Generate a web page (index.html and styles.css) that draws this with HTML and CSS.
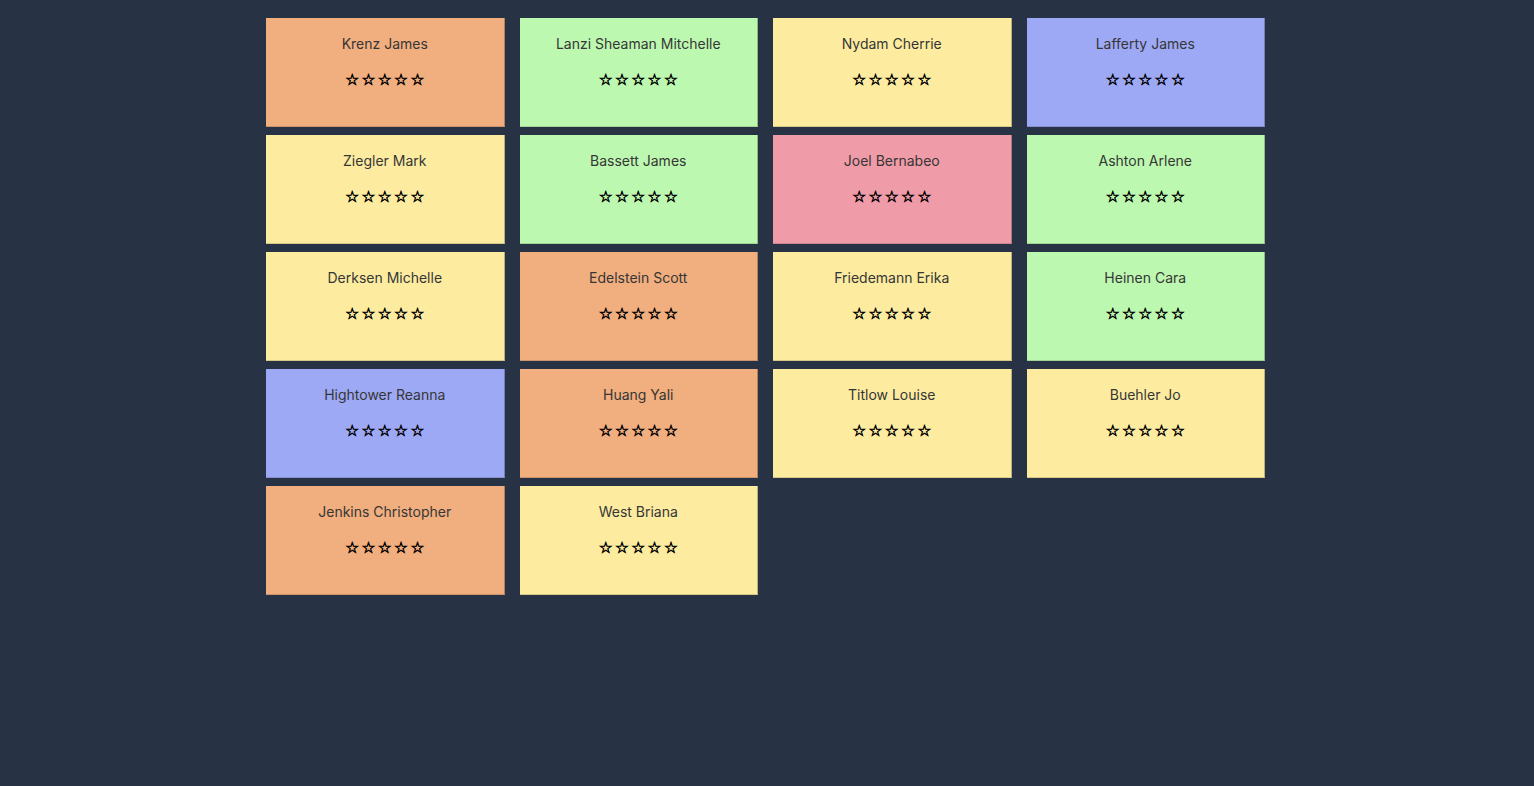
FILE: index.html
```html
<!DOCTYPE html>
<html>
<head>
<meta charset="utf-8">
<link rel="stylesheet" href="styles.css">
</head>
<body>
<div class="grid">
  <div class="card orange"><div class="name">Krenz James</div><div class="stars">☆☆☆☆☆</div></div>
  <div class="card green"><div class="name">Lanzi Sheaman Mitchelle</div><div class="stars">☆☆☆☆☆</div></div>
  <div class="card yellow"><div class="name">Nydam Cherrie</div><div class="stars">☆☆☆☆☆</div></div>
  <div class="card blue"><div class="name">Lafferty James</div><div class="stars">☆☆☆☆☆</div></div>
  <div class="card yellow"><div class="name">Ziegler Mark</div><div class="stars">☆☆☆☆☆</div></div>
  <div class="card green"><div class="name">Bassett James</div><div class="stars">☆☆☆☆☆</div></div>
  <div class="card red"><div class="name">Joel Bernabeo</div><div class="stars">☆☆☆☆☆</div></div>
  <div class="card green"><div class="name">Ashton Arlene</div><div class="stars">☆☆☆☆☆</div></div>
  <div class="card yellow"><div class="name">Derksen Michelle</div><div class="stars">☆☆☆☆☆</div></div>
  <div class="card orange"><div class="name">Edelstein Scott</div><div class="stars">☆☆☆☆☆</div></div>
  <div class="card yellow"><div class="name">Friedemann Erika</div><div class="stars">☆☆☆☆☆</div></div>
  <div class="card green"><div class="name">Heinen Cara</div><div class="stars">☆☆☆☆☆</div></div>
  <div class="card blue"><div class="name">Hightower Reanna</div><div class="stars">☆☆☆☆☆</div></div>
  <div class="card orange"><div class="name">Huang Yali</div><div class="stars">☆☆☆☆☆</div></div>
  <div class="card yellow"><div class="name">Titlow Louise</div><div class="stars">☆☆☆☆☆</div></div>
  <div class="card yellow"><div class="name">Buehler Jo</div><div class="stars">☆☆☆☆☆</div></div>
  <div class="card orange"><div class="name">Jenkins Christopher</div><div class="stars">☆☆☆☆☆</div></div>
  <div class="card yellow"><div class="name">West Briana</div><div class="stars">☆☆☆☆☆</div></div>
</div>
</body>
</html>
```
FILE: styles.css
```css
html, body {
  margin: 0;
  padding: 0;
  background: #273345;
  height: 100%;
}
body {
  font-family: "Inter", "Liberation Sans", sans-serif;
}
.grid {
  display: grid;
  grid-template-columns: repeat(4, 1fr);
  column-gap: 15px;
  row-gap: 8px;
  width: 999px;
  margin: 0 auto;
  padding-top: 18px;
  position: relative;
  left: -1.5px;
}
.card {
  height: 109px;
  box-sizing: border-box;
  padding-top: 16px;
  text-align: center;
  border-right: 1px solid rgba(0,0,0,0.25);
  border-bottom: 1px solid rgba(0,0,0,0.15);
}
.name {
  font-size: 14px;
  line-height: 20px;
  color: #363636;
}
.stars {
  margin-top: 16px;
  font-family: "DejaVu Sans", sans-serif;
  font-size: 15.5px;
  line-height: 20px;
  letter-spacing: 2.4px;
  padding-left: 2.4px;
  color: #000;
  -webkit-text-stroke: 0.6px #000;
}
.orange { background: #f1ae7e; }
.green { background: #bdf8b0; }
.yellow { background: #fdeca0; }
.blue { background: #9ea9f5; }
.red { background: #f09ba8; }
```
